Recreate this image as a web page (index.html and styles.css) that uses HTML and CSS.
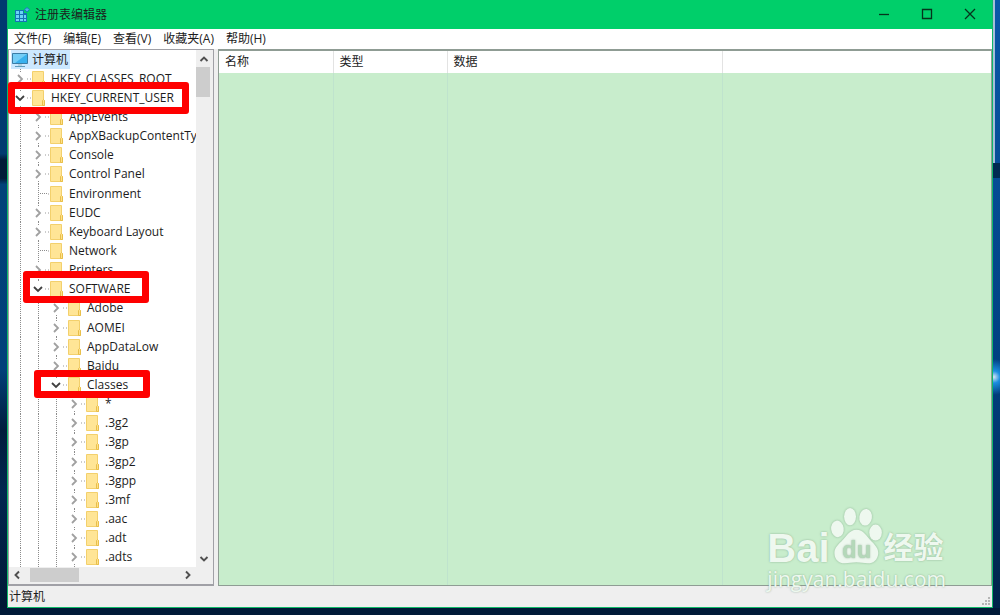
FILE: index.html
```html
<!DOCTYPE html>
<html lang="zh-CN">
<head>
    <meta charset="UTF-8">
    <meta name="viewport" content="width=device-width, initial-scale=1.0">
    <title>注册表编辑器</title>
    <link rel="stylesheet" href="styles.css">
</head>
<body>

    <!-- Shared icons -->
    <svg class="sprite" aria-hidden="true">
        <symbol id="closed" viewBox="0 0 18 14">
            <path d="M7 3l4 4-4 4" fill="none" stroke="#a0a0a0" stroke-width="1.8"/>
            <path d="M16 7h1" stroke="#999"/>
        </symbol>
        <symbol id="opened" viewBox="0 0 18 14">
            <path d="M5 5l4 4 4-4" fill="none" stroke="#404040" stroke-width="1.8"/>
            <path d="M16 7h1" stroke="#999"/>
        </symbol>
        <symbol id="folder" viewBox="0 0 18 16">
            <path d="M1 8h1" stroke="#999"/>
            <path d="M3.500 .500h11v9l1 1v5h-12z" fill="#ffe596" stroke="#f3d06c"/>
            <path d="M13.500 15.500v-5l1-1 1 1v5z" fill="#ffe08a" stroke="#e8bf4a"/>
        </symbol>
        <symbol id="arrow" viewBox="0 0 10 10">
            <path d="M1.500 7L5 3.500 8.500 7" fill="none" stroke="#505050" stroke-width="1.900"/>
        </symbol>
    </svg>

    <div class="window">

        <!-- Title bar -->
        <header class="titlebar">
            <svg class="app-icon" viewBox="0 0 16 16" aria-hidden="true">
                <path d="M1 3h9v3h3v9H1z" fill="#1673b5"/>
                <path d="M2 4h3v3H2zM6 4h3v3H6zM2 8h3v3H2zM6 8h3v3H6zM10 8h2v3h-2zM2 12h3v2H2zM6 12h3v2H6zM10 12h2v2h-2z" fill="#69d4f5"/>
                <path d="M13 .500l2.500 2L13 5l-2.500-2.500z" fill="#4ab7e5" stroke="#1a7dba"/>
            </svg>
            <h1>注册表编辑器</h1>
            <div class="window-buttons">
                <button type="button" aria-label="最小化"><svg viewBox="0 0 10 10"><path d="M0 5.500h10"/></svg></button>
                <button type="button" aria-label="最大化"><svg viewBox="0 0 10 10"><path d="M.500 .500h9v9h-9z"/></svg></button>
                <button type="button" aria-label="关闭"><svg viewBox="0 0 10 10"><path d="M0 0l10 10M10 0L0 10"/></svg></button>
            </div>
        </header>

        <!-- Menu -->
        <nav class="menubar">
            <button type="button">文件(F)</button>
            <button type="button">编辑(E)</button>
            <button type="button">查看(V)</button>
            <button type="button">收藏夹(A)</button>
            <button type="button">帮助(H)</button>
        </nav>

        <main class="panes">
            <section class="tree-pane">
                <ul class="tree" id="tree">
                    <li class="root">
                        <span class="selected">
                            <svg class="pc" viewBox="0 0 18 16" aria-hidden="true">
                                <path d="M1.500 1.500h15v10h-15z" fill="#39b1ee" stroke="#3b7da6"/>
                                <path d="M2 2h14L4 11H2z" fill="#74cdf6"/>
                                <path d="M7 12h4v2H7z" fill="#b4d2e0"/>
                                <path d="M4 14.500h10" stroke="#5f9dbc"/>
                            </svg>
                            计算机
                        </span>
                    </li>
                </ul>
                <div class="scroll-v">
                    <button type="button" aria-label="向上滚动"><svg><use href="#arrow"/></svg></button>
                    <div class="track"><div class="thumb"></div></div>
                    <button type="button" class="down" aria-label="向下滚动"><svg><use href="#arrow"/></svg></button>
                </div>
                <div class="scroll-h">
                    <button type="button" class="left" aria-label="向左滚动"><svg><use href="#arrow"/></svg></button>
                    <div class="track"><div class="thumb"></div></div>
                    <button type="button" class="right" aria-label="向右滚动"><svg><use href="#arrow"/></svg></button>
                </div>
            </section>

            <section class="list-pane">
                <table>
                    <thead>
                        <tr>
                            <th class="name">名称</th>
                            <th class="type">类型</th>
                            <th class="data">数据</th>
                            <th class="rest"></th>
                        </tr>
                    </thead>
                    <tbody>
                        <tr><td></td><td></td><td></td><td></td></tr>
                    </tbody>
                </table>
            </section>
        </main>

        <footer class="statusbar">
            <span>计算机</span>
            <svg class="grip" viewBox="0 0 9 9" aria-hidden="true">
                <path d="M6 0h2v2H6zM3 3h2v2H3zM6 3h2v2H6zM0 6h2v2H0zM3 6h2v2H3zM6 6h2v2H6z" fill="#b5b5b5"/>
            </svg>
        </footer>

        <!-- Highlights over the keys to open -->
        <div class="mark mark-user"></div>
        <div class="mark mark-software"></div>
        <div class="mark mark-classes"></div>

        <div class="watermark">
            <div class="brand">
                <span class="bai">Bai</span>
                <svg class="paw" viewBox="234 50 162 178">
                    <ellipse cx="256" cy="119" rx="19" ry="25" transform="rotate(-8 256 119)"/>
                    <ellipse cx="294" cy="82" rx="18" ry="26"/>
                    <ellipse cx="341" cy="84" rx="19" ry="25" transform="rotate(8 341 84)"/>
                    <ellipse cx="371" cy="130" rx="19" ry="24"/>
                    <path d="M313 122c22 0 31 20 46 35 14 13 21 24 20 37-2 18-14 29-31 29-12 0-22-3-35-3s-23 3-35 3c-17 0-30-11-31-29-1-14 8-25 20-36 16-15 25-36 46-36z"/>
                    <text x="314" y="208" text-anchor="middle">du</text>
                </svg>
                <span class="jy">经验</span>
            </div>
            <div class="site">jingyan.baidu.com</div>
        </div>
    </div>

    <script>
        // [level, name, state]
        const keys = [
            [1, "HKEY_CLASSES_ROOT", "closed"],
            [1, "HKEY_CURRENT_USER", "opened"],
            [2, "AppEvents", "closed"],
            [2, "AppXBackupContentTy", "closed"],
            [2, "Console", "closed"],
            [2, "Control Panel", "closed"],
            [2, "Environment", "leaf"],
            [2, "EUDC", "closed"],
            [2, "Keyboard Layout", "closed"],
            [2, "Network", "leaf"],
            [2, "Printers", "closed"],
            [2, "SOFTWARE", "opened"],
            [3, "Adobe", "closed"],
            [3, "AOMEI", "closed"],
            [3, "AppDataLow", "closed"],
            [3, "Baidu", "closed"],
            [3, "Classes", "opened"],
            [4, "*", "closed"],
            [4, ".3g2", "closed"],
            [4, ".3gp", "closed"],
            [4, ".3gp2", "closed"],
            [4, ".3gpp", "closed"],
            [4, ".3mf", "closed"],
            [4, ".aac", "closed"],
            [4, ".adt", "closed"],
            [4, ".adts", "closed"]
        ];

        const tree = document.getElementById("tree");

        keys.forEach(([level, name, state]) => {
            const li = document.createElement("li");
            li.className = "level-" + level;
            const toggle = state === "leaf"
                ? '<span class="guide leaf"></span>'
                : `<button type="button" class="guide toggle" aria-label="${name}"><svg><use href="#${state}"/></svg></button>`;
            li.innerHTML = toggle + '<svg class="folder"><use href="#folder"/></svg><span class="key"></span>';
            li.querySelector(".key").textContent = name;
            tree.appendChild(li);
        });
    </script>

</body>
</html>
```
FILE: styles.css
```css
* {
    margin: 0;
    padding: 0;
    box-sizing: border-box;
}

body {
    height: 100vh;
    padding: 0 7px 7px;
    font-family: "Open Sans", "Noto Sans CJK SC", sans-serif;
    font-size: 12px;
    line-height: 16px;
    color: #1c1c1c;
    background:
        linear-gradient(#a5bfd8, #a5bfd8) right 5px top 0 / 2px 163px no-repeat,
        linear-gradient(#002a52, #002a52) right 0 top 163px / 7px 15px no-repeat,
        radial-gradient(circle at right 6px top 377px, #d5e6f5 0, #1c8ee0 6px, transparent 18px),
        linear-gradient(#001a38, #001a38) left bottom / 100% 7px no-repeat,
        linear-gradient(#0a58a8, #003f80 60%, #002248) right top / 7px 100% no-repeat,
        linear-gradient(#003a70 25%, #001a38 26%, #001a38 29%, #004179 30%, #00407a 60%, #001c3c 70%, #002650 80%, #001833);
}

button {
    border: none;
    background: none;
    font: inherit;
    color: inherit;
}

.sprite {
    position: absolute;
    width: 0;
    height: 0;
}

.window {
    position: relative;
    height: 100%;
    display: flex;
    flex-direction: column;
    background: #efefef;
    border: 1px solid #10b868;
    border-top: none;
}

/* Title bar */
.titlebar {
    height: 29px;
    display: flex;
    align-items: center;
    background: #00cf6a;
    padding: 0 1px 0 6px;
}

.app-icon {
    width: 16px;
    height: 16px;
    margin-right: 5px;
}

.titlebar h1 {
    flex: 1;
    font-size: 12px;
    font-weight: normal;
}

.window-buttons {
    display: flex;
}

.window-buttons button {
    width: 43px;
    height: 29px;
}

.window-buttons svg {
    width: 10px;
    height: 10px;
    fill: none;
    stroke: #06331c;
    stroke-width: 1.3;
    overflow: visible;
}

/* Menu */
.menubar {
    height: 20px;
    display: flex;
    align-items: center;
    gap: 12px;
    padding-left: 6px;
    background: white;
}

/* Panes */
.panes {
    flex: 1;
    min-height: 0;
    display: flex;
    gap: 4px;
}

.tree-pane {
    width: 206px;
    display: grid;
    grid-template-columns: 1fr 17px;
    grid-template-rows: 1fr 17px;
    background: #efefef;
    border: 1px solid #a0a0a6;
    border-bottom-width: 2px;
}

.tree {
    min-width: 0;
    list-style: none;
    display: flex;
    flex-direction: column;
    background: white;
    overflow: hidden;
    padding-left: 2px;
}

.tree li {
    flex: 1;
    min-height: 0;
    display: flex;
    align-items: center;
    white-space: nowrap;
}

/* Dotted connector lines, one per 18px of indent */
.tree li::before,
.guide {
    align-self: stretch;
    flex-shrink: 0;
    background:
        linear-gradient(90deg, white 9px, transparent 9px, transparent 10px, white 10px) 0 0 / 18px 100%,
        repeating-linear-gradient(#8c8c8c 0 1px, white 1px 2px);
}

.level-2::before {
    content: "";
    width: 18px;
}

.level-3::before {
    content: "";
    width: 36px;
}

.level-4::before {
    content: "";
    width: 54px;
}

.guide {
    width: 18px;
    display: flex;
    align-items: center;
}

.toggle svg {
    width: 18px;
    height: 14px;
    background: white;
}

.leaf::after {
    content: "";
    flex: 1;
    height: 1px;
    margin-left: 10px;
    background: repeating-linear-gradient(90deg, white 0 1px, #8c8c8c 1px 2px);
}

.folder {
    flex-shrink: 0;
    width: 18px;
    height: 16px;
    margin-right: 4px;
}

.selected {
    display: flex;
    align-items: center;
    gap: 3px;
    height: 100%;
    padding-right: 2px;
    background: #cce8ff;
}

.pc {
    width: 18px;
    height: 16px;
}

/* Scroll bars */
.scroll-v {
    display: flex;
    flex-direction: column;
    padding: 1px 2px 0 0;
}

.scroll-h {
    grid-column: 1 / 2;
    display: flex;
}

.track {
    flex: 1;
    display: flex;
}

.thumb {
    background: #cdcdcd;
}

.scroll-v .thumb {
    width: 14px;
    height: 30px;
}

.scroll-h .thumb {
    width: 49px;
    height: 14px;
    margin: 1px 5px;
}

.scroll-v button,
.scroll-h button {
    width: 16px;
    height: 16px;
    display: flex;
    align-items: center;
    justify-content: center;
}

.scroll-v svg,
.scroll-h svg {
    width: 10px;
    height: 10px;
}

.down svg {
    transform: rotate(180deg);
}

.left svg {
    transform: rotate(-90deg);
}

.right svg {
    transform: rotate(90deg);
}

/* Value list */
.list-pane {
    flex: 1;
    background: #c8edcc;
    border: 1px solid #8f9c94;
    border-top-width: 2px;
}

table {
    width: 100%;
    height: 100%;
    table-layout: fixed;
    border-collapse: collapse;
}

th {
    height: 22px;
    padding-left: 6px;
    text-align: left;
    font-weight: normal;
    background: white;
    border-right: 1px solid #e3e3e3;
}

td {
    border-right: 1px solid #bfe3cd;
}

th:last-child,
td:last-child {
    border-right: none;
}

.name,
.type {
    width: 114px;
}

.data {
    width: 275px;
}

/* Status bar */
.statusbar {
    height: 21px;
    display: flex;
    align-items: center;
    justify-content: space-between;
    padding: 0 1px;
}

.grip {
    width: 9px;
    height: 9px;
    align-self: flex-end;
    margin-bottom: 1px;
}

/* Red highlight boxes */
.mark {
    position: absolute;
    border: 7px solid #fe0000;
    border-radius: 3px;
    pointer-events: none;
}

.mark-user {
    left: 0;
    top: 82px;
    width: 181px;
    height: 32px;
}

.mark-software {
    left: 15px;
    top: 271px;
    width: 126px;
    height: 32px;
}

.mark-classes {
    left: 26px;
    top: 370px;
    width: 116px;
    height: 28px;
}

/* Watermark */
.watermark {
    position: absolute;
    right: 46px;
    bottom: 16px;
    color: #eef8ef;
    text-shadow: 0 0 2px rgba(90, 130, 100, 0.6);
    pointer-events: none;
}

.brand {
    display: flex;
    align-items: flex-end;
}

.bai {
    font-family: "Liberation Sans", sans-serif;
    font-size: 40px;
    font-weight: bold;
    line-height: 38px;
}

.paw {
    width: 54px;
    height: 59px;
    margin-bottom: 2px;
    fill: #eef8ef;
    filter: drop-shadow(0 0 1px rgba(90, 130, 100, 0.5));
}

.paw text {
    font-family: "Liberation Sans", sans-serif;
    font-size: 72px;
    font-weight: bold;
    fill: #b4d8b9;
}

.jy {
    font-size: 30px;
    font-weight: bold;
    line-height: 40px;
}

.site {
    font-size: 21px;
    line-height: 24px;
}
```
